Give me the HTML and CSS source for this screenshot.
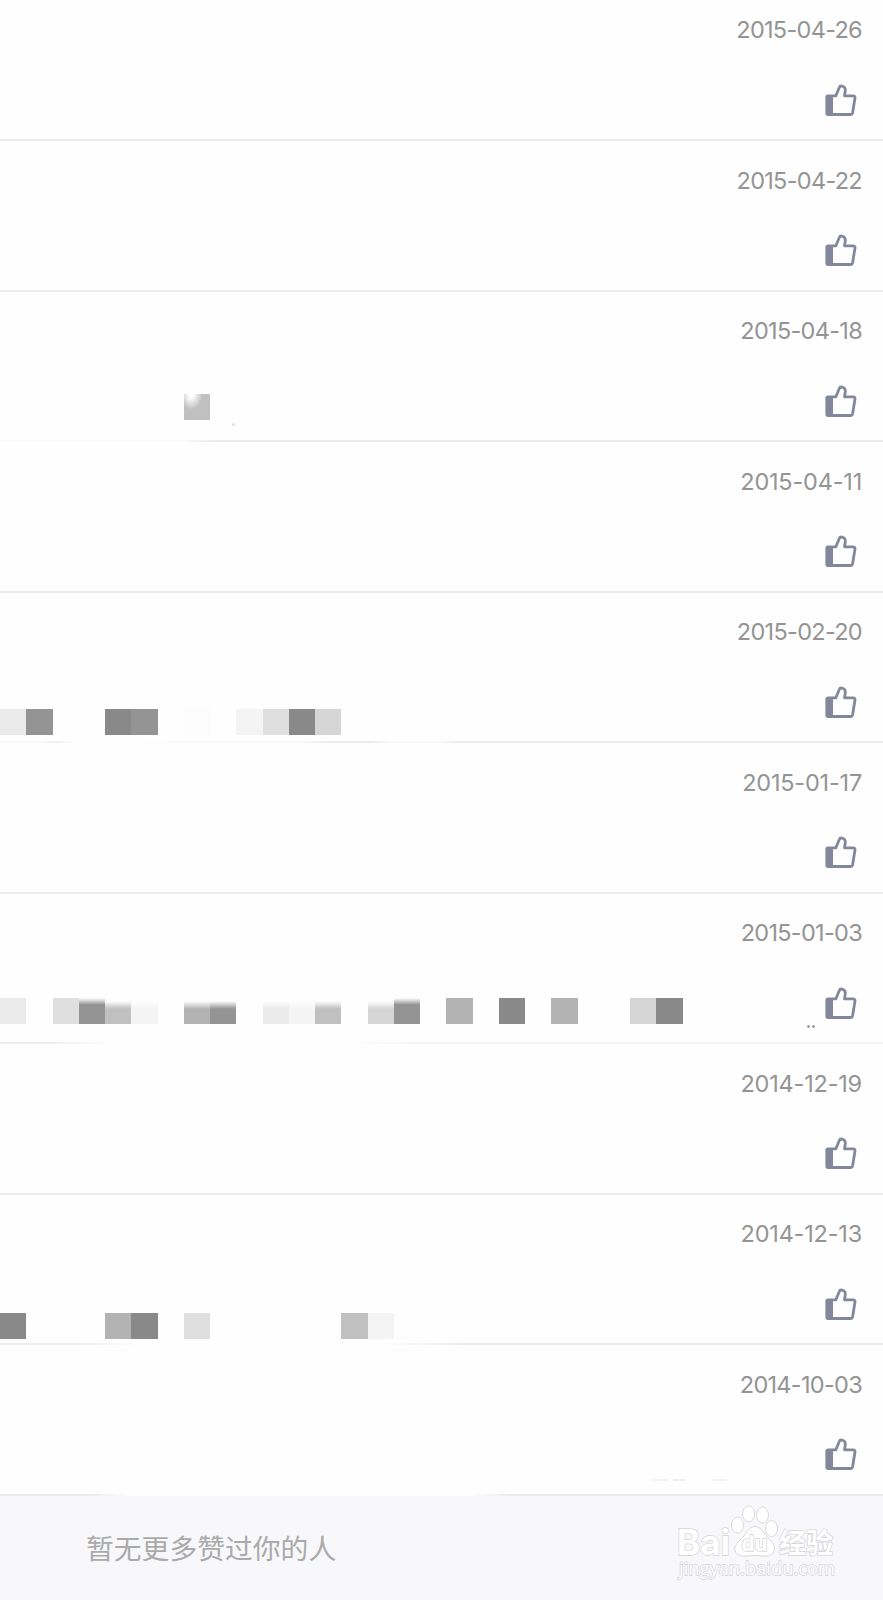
FILE: index.html
```
<!DOCTYPE html>
<html lang="zh-CN">
<head>
    <meta charset="utf-8">
    <title>赞过我的人</title>
    <link rel="stylesheet" href="styles.css">
</head>
<body>

<svg class="defs">
    <symbol id="thumb" viewBox="0 0 32 33">
        <path d="M1.8 11.8h6.2v18.6H2.6q-1.2 0-1.2-1.2z" fill="currentColor"/>
        <path d="M3 11.8H10.9L14.3 3.5Q14.9 1.8 16.7 2Q20.7 2.8 20.3 6.8L19.5 11.8H28Q30.3 11.9 30 14.1L27.6 28.7Q27.2 30.5 25.4 30.5H3Q1.8 30.5 1.8 29.3V13Q1.8 11.8 3 11.8Z" fill="none" stroke="currentColor" stroke-width="2.8" stroke-linejoin="round"/>
    </symbol>
</svg>

<div class="list">
    <div class="row first">
        <div class="mosaic"></div>
        <div class="side"><span class="date">2015-04-26</span><svg class="icon"><use href="#thumb"/></svg></div>
    </div>
    <div class="row">
        <div class="mosaic"></div>
        <div class="side"><span class="date">2015-04-22</span><svg class="icon"><use href="#thumb"/></svg></div>
    </div>
    <div class="row erased-a">
        <div class="mosaic m3"><i></i><i></i><i></i><i></i><i></i><i></i><i></i><i class="g6 corner"></i><i class="speck"></i></div>
        <div class="side"><span class="date">2015-04-18</span><svg class="icon"><use href="#thumb"/></svg></div>
    </div>
    <div class="row">
        <div class="mosaic"></div>
        <div class="side"><span class="date loose">2015-04-11</span><svg class="icon"><use href="#thumb"/></svg></div>
    </div>
    <div class="row erased-b">
        <div class="mosaic m5"><i class="g2"></i><i class="g8"></i><i></i><i></i><i class="g9"></i><i class="g8"></i><i></i><i class="g0"></i><i></i><i class="g1"></i><i class="g3"></i><i class="g9"></i><i class="g4"></i></div>
        <div class="side"><span class="date">2015-02-20</span><svg class="icon"><use href="#thumb"/></svg></div>
    </div>
    <div class="row">
        <div class="mosaic"></div>
        <div class="side"><span class="date loose">2015-01-17</span><svg class="icon"><use href="#thumb"/></svg></div>
    </div>
    <div class="row erased-c">
        <div class="mosaic m7"><i class="g2"></i><i></i><i class="g3"></i><i class="g8 fade-s"></i><i class="g6 fade"></i><i class="g1 fade"></i><i></i><i class="g7 fade"></i><i class="g8 fade"></i><i></i><i class="g2 fade"></i><i class="g1 fade"></i><i class="g6 fade"></i><i></i><i class="g4 fade"></i><i class="g8 fade-s"></i><i></i><i class="g7"></i><i></i><i class="g9"></i><i></i><i class="g7"></i><i></i><i></i><i class="g4"></i><i class="g9"></i><i class="dots"></i></div>
        <div class="side"><span class="date">2015-01-03</span><svg class="icon"><use href="#thumb"/></svg></div>
    </div>
    <div class="row">
        <div class="mosaic"></div>
        <div class="side"><span class="date loose">2014-12-19</span><svg class="icon"><use href="#thumb"/></svg></div>
    </div>
    <div class="row erased-d">
        <div class="mosaic m9"><i class="g9"></i><i></i><i></i><i></i><i class="g7"></i><i class="g9"></i><i></i><i class="g3"></i><i></i><i></i><i></i><i></i><i></i><i class="g6"></i><i class="g1"></i></div>
        <div class="side"><span class="date loose">2014-12-13</span><svg class="icon"><use href="#thumb"/></svg></div>
    </div>
    <div class="row erased-e">
        <div class="mosaic"></div>
        <div class="side"><span class="date">2014-10-03</span><svg class="icon"><use href="#thumb"/></svg></div>
        <div class="residue"></div>
    </div>
</div>

<div class="footer">
    <span class="empty">暂无更多赞过你的人</span>
    <svg class="watermark" viewBox="0 0 164 90">
        <g fill="#fff" stroke="#d9d9dc" stroke-width="1">
            <ellipse cx="64.5" cy="29" rx="6" ry="8"/>
            <ellipse cx="75.5" cy="18" rx="6" ry="8"/>
            <ellipse cx="89.5" cy="19" rx="6" ry="8"/>
            <ellipse cx="98.5" cy="32.5" rx="6" ry="8"/>
            <path d="M82 30.5Q87 30.5 91 37Q94 41 98 45Q104 52 100 57Q97 61 90 60Q82 58.5 74 60Q65 61 62.5 56Q60 51 66 45Q71 41 73 37Q77 30.5 82 30.5Z"/>
        </g>
        <g class="mark">
            <text class="bai" x="4" y="59" textLength="53" lengthAdjust="spacingAndGlyphs">Bai</text>
            <text class="du" x="68.5" y="55" textLength="26" lengthAdjust="spacingAndGlyphs">du</text>
            <text class="jingyan" x="106" y="57" textLength="54" lengthAdjust="spacingAndGlyphs">经验</text>
            <text class="url" x="6" y="79" textLength="156" lengthAdjust="spacingAndGlyphs">jingyan.baidu.com</text>
        </g>
    </svg>
</div>

</body>
</html>
```
FILE: styles.css
```
:root {
    --line: #ebebed;
    --icon-color: #82879b;
}

body {
    margin: 0;
    width: 883px;
    height: 1600px;
    overflow: hidden;
    display: flex;
    flex-direction: column;
    background: #fefefe;
    font-family: Inter, "Noto Sans CJK SC", sans-serif;
}

.defs {
    position: absolute;
    width: 0;
    height: 0;
}

.row {
    position: relative;
    box-sizing: border-box;
    height: 150.5px;
    padding: 24.6px 21px 0 0;
    display: flex;
    justify-content: space-between;
    background: linear-gradient(var(--line), var(--line)) bottom / 100% 2px no-repeat;
}

.row.first {
    height: 141px;
    padding-top: 15px;
}

.side {
    display: flex;
    flex-direction: column;
    align-items: flex-end;
}

.date {
    height: 30px;
    font-size: 23.5px;
    line-height: 30px;
    letter-spacing: -0.7px;
    color: #949494;
    white-space: nowrap;
}

/* dates with several narrow ones */
.date.loose {
    letter-spacing: -0.2px;
}

.icon {
    width: 32px;
    height: 33px;
    margin: 38.5px 5px 0 0;
    color: var(--icon-color);
}

/* pixelated blocks over the names */
.mosaic {
    display: flex;
    height: 26px;
}

.mosaic i {
    flex-shrink: 0;
    width: 26.25px;
    height: 26px;
    background: var(--shade, none);
}

.m3 { margin-top: 78px; }
.m5 { margin-top: 92px; }
.m7 { margin-top: 80px; }
.m9 { margin-top: 94px; }

.g0 { --shade: #fcfcfc; }
.g1 { --shade: #f4f4f4; }
.g2 { --shade: #eaeaea; }
.g3 { --shade: #dfdfdf; }
.g4 { --shade: #d5d5d5; }
.g6 { --shade: #c0c0c0; }
.g7 { --shade: #b3b3b3; }
.g8 { --shade: #949494; }
.g9 { --shade: #898989; }

.mosaic .fade {
    background: linear-gradient(#fefefe 12%, var(--shade) 42%);
}

.mosaic .fade-s {
    background: linear-gradient(#fefefe, var(--shade) 26%);
}

.mosaic .corner {
    background: radial-gradient(ellipse at 28% 0, #fefefe 10%, var(--shade) 42%);
}

.mosaic .speck {
    width: 3px;
    height: 3px;
    margin: 29px 0 0 22px;
    background: #ddd;
    border-radius: 50%;
}

.mosaic .dots {
    width: 10px;
    height: 3px;
    margin: 27px -133px 0 123px;
    background: radial-gradient(circle, #999 1px, transparent 1.6px) 0 0 / 5px 3px;
}

/* divider partly wiped out */
.erased-a { background-image: linear-gradient(90deg, #fafafa 180px, var(--line) 215px); }
.erased-b { background-image: linear-gradient(90deg, #fafafa 40px, #eee 55px, #fefefe 75px, #fafafa 300px, var(--line) 330px, var(--line) 370px, #f8f8f8 390px, #f8f8f8 440px, var(--line) 460px); }
.erased-c { background-image: linear-gradient(90deg, #eee 50px, #fefefe 110px, #fefefe 350px, #f2f2f2 440px); }
.erased-d { background-image: linear-gradient(90deg, #eee 80px, #fefefe 140px, #fefefe 380px, var(--line) 465px); }
.erased-e { background-image: linear-gradient(90deg, var(--line) 90px, #fefefe 130px, #fefefe 470px, var(--line) 510px); }

.residue {
    position: absolute;
    left: 653px;
    bottom: 15px;
    width: 74px;
    height: 2px;
    background: linear-gradient(90deg, #f3f3f3 15px, transparent 15px, transparent 20px, #eee 20px, #eee 32px, transparent 32px, transparent 58px, #f3f3f3 58px);
}

.footer {
    flex: 1;
    display: flex;
    justify-content: space-between;
    padding: 0 45px 0 86px;
    background: #f8f8fa;
}

.empty {
    margin-top: 33px;
    height: 40px;
    line-height: 40px;
    font-size: 27.8px;
    color: #aaa;
}

.watermark {
    width: 164px;
    height: 90px;
    margin-right: 1px;
}

.mark {
    fill: #fff;
    stroke: #d4d4d8;
    stroke-width: 1.4px;
    paint-order: stroke;
}

.bai,
.du {
    font-family: Inter, sans-serif;
    font-weight: 700;
    font-size: 35px;
}

.du {
    font-size: 22px;
}

.jingyan {
    font-family: "Noto Sans CJK SC", sans-serif;
    font-weight: 700;
    font-size: 27px;
}

.url {
    font-family: "Open Sans", sans-serif;
    font-size: 18px;
}
```
